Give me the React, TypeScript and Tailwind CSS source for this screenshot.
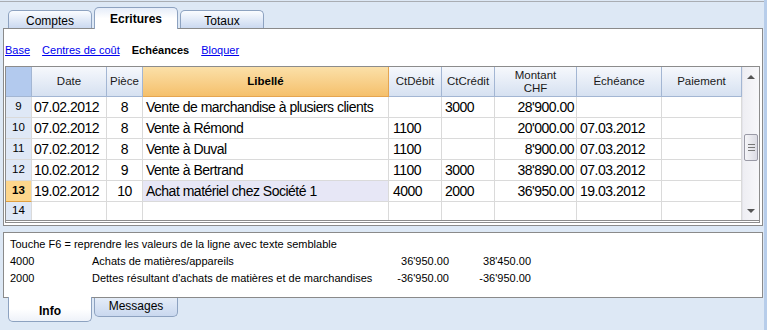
import React from 'react';

// Journal des écritures – vue Echéances

const cols = 'grid grid-cols-[26px_75px_36px_246px_53px_53px_82px_85px_80px]';

const rows = [
  { n: '9', date: '07.02.2012', doc: '8', text: 'Vente de marchandise à plusiers clients', deb: '', cred: '3000', amount: "28'900.00", due: '' },
  { n: '10', date: '07.02.2012', doc: '8', text: 'Vente à Rémond', deb: '1100', cred: '', amount: "20'000.00", due: '07.03.2012' },
  { n: '11', date: '07.02.2012', doc: '8', text: 'Vente à Duval', deb: '1100', cred: '', amount: "8'900.00", due: '07.03.2012' },
  { n: '12', date: '10.02.2012', doc: '9', text: 'Vente à Bertrand', deb: '1100', cred: '3000', amount: "38'890.00", due: '07.03.2012' },
  { n: '13', date: '19.02.2012', doc: '10', text: 'Achat matériel chez Société 1', deb: '4000', cred: '2000', amount: "36'950.00", due: '19.03.2012', current: true },
];

const head = 'flex items-center justify-center border-r border-b border-[#a3b6d3] bg-gradient-to-b from-[#f6f8fc] to-[#d6e1f1] text-[11.5px] text-[#1a1a1a]';
const cell = 'flex items-center border-r border-b border-[#dadada] px-[2px] whitespace-nowrap overflow-hidden';

function Tab({ label, active }: { label: string; active?: boolean }) {
  return active ? (
    <div className="relative top-px z-10 flex h-[22px] w-[84px] items-center justify-center rounded-t-[5px] border border-b-0 border-[#8da2c0] bg-gradient-to-b from-[#e6edf9] via-white to-white text-[12px] font-bold">
      {label}
    </div>
  ) : (
    <div className="flex h-[18px] w-[84px] items-center justify-center rounded-t-[5px] border border-b-0 border-[#8da2c0] bg-gradient-to-b from-[#fafcff] to-[#cbd9f0] pt-[2px] text-[12px]">
      {label}
    </div>
  );
}

function Scrollbar() {
  return (
    <div className="flex w-[17px] flex-col items-center border-l border-[#e4e4ea] bg-gradient-to-r from-[#eeeef3] to-[#f7f7fa]">
      <div className="mt-[8px] h-0 w-0 border-x-[4px] border-b-[4px] border-x-transparent border-b-[#555]" />
      <div className="mt-[55px] flex h-[27px] w-[14px] flex-col items-center justify-center gap-[2px] rounded-[2px] border border-[#9a9aa6] bg-gradient-to-r from-[#f5f5f8] to-[#dcdce4]">
        <div className="h-px w-[7px] bg-[#777]" />
        <div className="h-px w-[7px] bg-[#777]" />
        <div className="h-px w-[7px] bg-[#777]" />
      </div>
      <div className="mt-auto mb-[7px] h-0 w-0 border-x-[4px] border-t-[4px] border-x-transparent border-t-[#555]" />
    </div>
  );
}

export default function App() {
  return (
    <div className="relative h-[330px] w-[767px] overflow-hidden border-r-[3px] border-[#b7cdea] bg-[#dde8f5] font-['Liberation_Sans',Arial,sans-serif] text-black">
      <div className="h-[2px] border-b border-[#a9adb3]" />

      {/* Onglets du haut */}
      <div className="flex h-[26px] items-end gap-[2px] pl-[8px]">
        <Tab label="Comptes" />
        <Tab label="Ecritures" active />
        <Tab label="Totaux" />
      </div>

      {/* Panneau principal */}
      <div className="ml-[3px] w-[760px] border border-[#8a8a8a] bg-white">
        <div className="flex h-[37px] items-center gap-[12px] pl-[1px] pt-[6px] text-[11px]">
          <span className="text-[#0000ee] underline">Base</span>
          <span className="text-[#0000ee] underline">Centres de coût</span>
          <span className="font-bold">Echéances</span>
          <span className="text-[#0000ee] underline">Bloquer</span>
        </div>

        <div className="ml-px flex w-[755px] border-x border-t border-b-[3px] border-double border-[#8c8c8c]">
          <div className="flex-1">
            <div className={`${cols} h-[30px]`}>
              <div className="border-r border-b border-[#a3b6d3] bg-[#b3caee]" />
              <div className={head}>Date</div>
              <div className={head}>Pièce</div>
              <div className="flex items-center justify-center border-r border-b border-[#e5a550] bg-gradient-to-b from-[#fbe0a8] to-[#f5c06b] text-[11.5px] font-bold">
                Libellé
              </div>
              <div className={head}>CtDébit</div>
              <div className={head}>CtCrédit</div>
              <div className={`${head} flex-col leading-[13px]`}>
                <span>Montant</span>
                <span>CHF</span>
              </div>
              <div className={head}>Échéance</div>
              <div className={head}>Paiement</div>
            </div>

            {rows.map((r) => (
              <div key={r.n} className={`${cols} h-[21px] text-[14px] tracking-[-0.5px]`}>
                <div
                  className={`flex items-center justify-center border-r border-b text-[11.5px] tracking-normal ${
                    r.current ? 'border-b-[#e0a040] border-r-[#dadada] bg-[#fdd68c] font-bold' : 'border-[#dadada] bg-[#dfe8f6]'
                  }`}
                >
                  {r.n}
                </div>
                <div className={cell}>{r.date}</div>
                <div className={`${cell} justify-center`}>{r.doc}</div>
                <div className={`${cell} pl-[3px] ${r.current ? 'bg-[#e7e7f6]' : ''}`}>{r.text}</div>
                <div className={`${cell} pl-[4px]`}>{r.deb}</div>
                <div className={`${cell} pl-[3px]`}>{r.cred}</div>
                <div className={`${cell} justify-end`}>{r.amount}</div>
                <div className={`${cell} pl-[3px]`}>{r.due}</div>
                <div className={cell} />
              </div>
            ))}

            <div className={`${cols} h-[18px]`}>
              <div className="flex items-center justify-center border-r border-[#dadada] bg-[#dfe8f6] text-[11.5px]">14</div>
              <div className="border-r border-[#dadada]" />
              <div className="border-r border-[#dadada]" />
              <div className="border-r border-[#dadada]" />
              <div className="border-r border-[#dadada]" />
              <div className="border-r border-[#dadada]" />
              <div className="border-r border-[#dadada]" />
              <div className="border-r border-[#dadada]" />
              <div className="border-r border-[#dadada]" />
            </div>
          </div>
          <Scrollbar />
        </div>
        <div className="h-[2px]" />
      </div>

      {/* Panneau info */}
      <div className="mt-[6px] ml-[3px] h-[66px] w-[760px] border border-[#8a8a8a] bg-white pl-[6px] pt-[3px] text-[11px] leading-[17px] whitespace-nowrap">
        <div>Touche F6 = reprendre les valeurs de la ligne avec texte semblable</div>
        <div className="grid grid-cols-[82px_278px_79px_82px]">
          <span>4000</span>
          <span>Achats de matières/appareils</span>
          <span className="text-right">36'950.00</span>
          <span className="text-right">38'450.00</span>
        </div>
        <div className="grid grid-cols-[82px_278px_79px_82px] leading-[16px]">
          <span>2000</span>
          <span>Dettes résultant d'achats de matières et de marchandises</span>
          <span className="text-right">-36'950.00</span>
          <span className="text-right">-36'950.00</span>
        </div>
      </div>

      {/* Onglets du bas */}
      <div className="flex items-start gap-[2px] pl-[8px]">
        <div className="relative -top-px z-10 flex h-[25px] w-[84px] items-center justify-center rounded-b-[5px] border border-t-0 border-[#8da2c0] bg-gradient-to-b from-white via-white to-[#eef2f9] pt-[3px] text-[12px] font-bold">
          Info
        </div>
        <div className="flex h-[19px] w-[84px] items-center justify-center rounded-b-[5px] border border-t-0 border-[#8da2c0] bg-gradient-to-b from-[#e4ecf8] to-[#c9d8ef] pb-[2px] text-[12px]">
          Messages
        </div>
      </div>
    </div>
  );
}
